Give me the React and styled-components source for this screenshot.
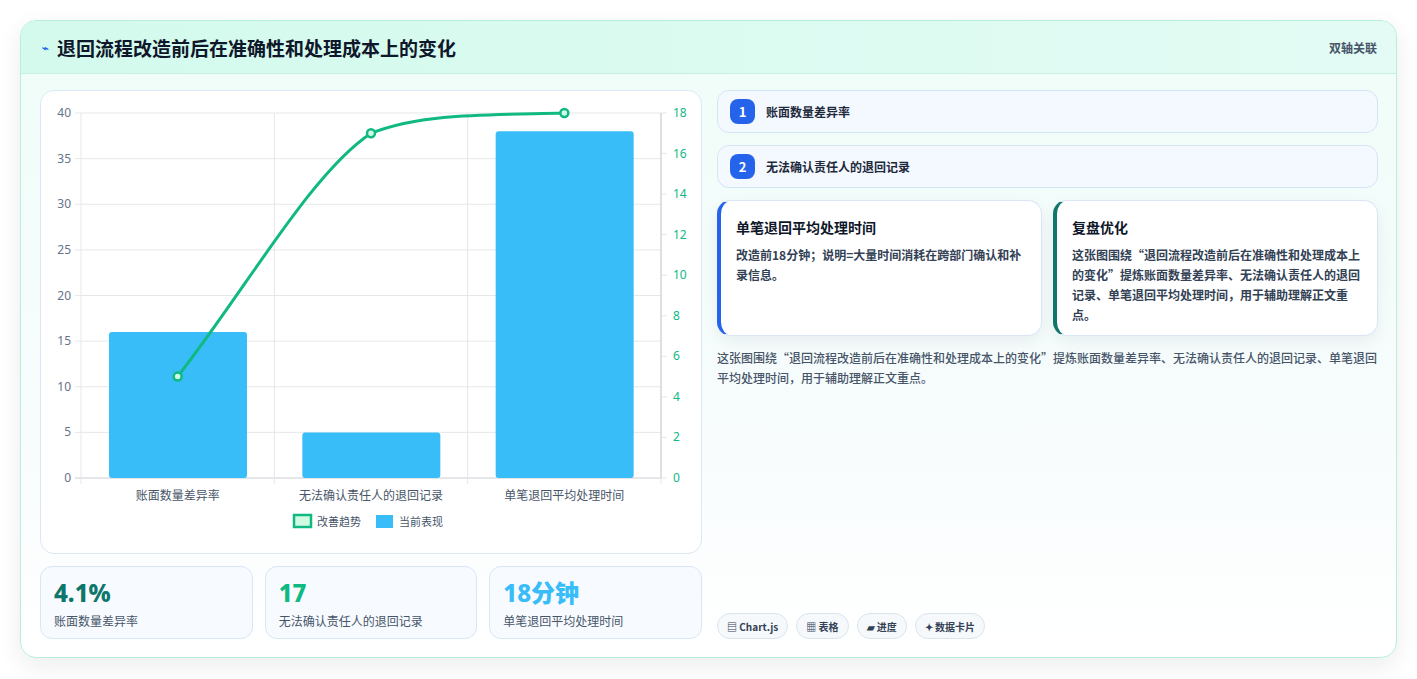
import React from "react";
import styled, { createGlobalStyle } from "styled-components";

const Global = createGlobalStyle`
  body { margin: 0; background: #fff; font-family: "Noto Sans CJK SC", "Noto Sans", sans-serif; }
`;

const Page = styled.div`
  padding: 20px 20px 21px 20px;
  width: 1417px;
  box-sizing: border-box;
`;

const Card = styled.div`
  width: 1377px;
  height: 638px;
  box-sizing: border-box;
  border: 1px solid #b9eedd;
  border-radius: 16px;
  background: linear-gradient(180deg, #effdf8 0%, #f7fcfd 60%, #ffffff 100%);
  box-shadow: 0 8px 24px rgba(15, 23, 42, 0.08);
  overflow: hidden;
  display: flex;
  flex-direction: column;
`;

const Header = styled.div`
  height: 55px;
  background: linear-gradient(90deg, #d3faed, #e3fbf4);
  border-bottom: 1px solid #c9efe3;
  display: flex;
  align-items: center;
  justify-content: space-between;
  padding: 0 19px 0 21px;
`;

const Title = styled.h1`
  margin: 0;
  font-size: 19px;
  font-weight: 700;
  color: #0f172a;
  display: flex;
  align-items: center;
  gap: 8px;
`;

const HeaderTag = styled.span`
  font-size: 12px;
  color: #475569;
  font-weight: 600;
`;

const Body = styled.div`
  display: grid;
  grid-template-columns: 662px 661px;
  gap: 15px;
  padding: 16px 19px 18px 19px;
  flex: 1;
`;

const Col = styled.div`
  display: flex;
  flex-direction: column;
  gap: 12px;
`;

const ChartCard = styled.div`
  height: 462px;
  background: #fff;
  border: 1px solid #dbe7f3;
  border-radius: 14px;
`;

const Stats = styled.div`
  display: grid;
  grid-template-columns: repeat(3, 1fr);
  gap: 12px;
`;

const Stat = styled.div`
  height: 73px;
  box-sizing: border-box;
  border: 1px solid #d8e7f5;
  border-radius: 12px;
  background: #f7fbff;
  padding: 10px 13px;
`;

const StatValue = styled.div`
  font-family: "Noto Sans", "Noto Sans CJK SC", sans-serif;
  font-size: 24px;
  font-weight: 800;
  line-height: 32px;
  color: ${(p) => p.color};
`;

const StatLabel = styled.div`
  font-size: 12px;
  color: #475569;
  margin-top: 3px;
`;

const Pill = styled.div`
  height: 43px;
  box-sizing: border-box;
  border: 1px solid #d3e5f5;
  border-radius: 12px;
  background: #f4f9ff;
  display: flex;
  align-items: center;
  gap: 11px;
  padding: 0 12px;
  font-size: 12px;
  font-weight: 600;
  color: #1e293b;
`;

const Num = styled.span`
  width: 25px;
  height: 25px;
  border-radius: 8px;
  background: #2563eb;
  color: #fff;
  font-size: 13px;
  font-weight: 700;
  display: flex;
  align-items: center;
  justify-content: center;
`;

const Cards = styled.div`
  display: grid;
  grid-template-columns: 1fr 1fr;
  gap: 11px;
`;

const Note = styled.div`
  height: 136px;
  box-sizing: border-box;
  background: #fff;
  border: 1px solid #dbe6f5;
  border-left: 4px solid ${(p) => p.accent};
  border-radius: 14px;
  padding: 16px 15px 0 15px;
  box-shadow: 0 6px 16px rgba(15, 23, 42, 0.06);
`;

const NoteTitle = styled.div`
  font-size: 14px;
  font-weight: 700;
  color: #0f172a;
  margin-bottom: 8px;
`;

const NoteText = styled.div`
  font-size: 12px;
  font-weight: 600;
  line-height: 20px;
  color: #334155;
`;

const Summary = styled.p`
  margin: 0;
  font-size: 12px;
  line-height: 20px;
  color: #475569;
  font-weight: 500;
`;

const Tags = styled.div`
  margin-top: auto;
  display: flex;
  gap: 8px;
`;

const Tag = styled.span`
  height: 26px;
  box-sizing: border-box;
  border: 1px solid #dbe4ee;
  border-radius: 13px;
  background: #f6f9fc;
  padding: 0 9px;
  font-size: 10px;
  font-weight: 700;
  color: #334155;
  display: flex;
  align-items: center;
`;

const cats = ["账面数量差异率", "无法确认责任人的退回记录", "单笔退回平均处理时间"];
const bars = [16, 5, 38];
const line = [5, 17, 18];

function Chart() {
  const x0 = 40, x1 = 620, y0 = 22, y1 = 387;
  const cw = (x1 - x0) / 3;
  const yL = (v) => y1 - ((y1 - y0) * v) / 40;
  const yR = (v) => y1 - ((y1 - y0) * v) / 18;
  const pts = line.map((v, i) => [x0 + cw * (i + 0.5), yR(v)]);
  const font = "Noto Sans, Noto Sans CJK SC, sans-serif";
  return (
    <svg width="661" height="460" style={{ display: "block" }}>
      {[0, 5, 10, 15, 20, 25, 30, 35, 40].map((v) => (
        <g key={v}>
          <line x1={x0 - 6} x2={x1} y1={yL(v)} y2={yL(v)} stroke={v === 0 ? "#c8ccd2" : "#e5e7eb"} />
          <text x={x0 - 10} y={yL(v) + 4} textAnchor="end" fontSize="12" fill="#64748b" fontFamily={font}>{v}</text>
        </g>
      ))}
      {[0, 2, 4, 6, 8, 10, 12, 14, 16, 18].map((v) => (
        <g key={v}>
          <line x1={x1} x2={x1 + 6} y1={yR(v)} y2={yR(v)} stroke="#e5e7eb" />
          <text x={x1 + 12} y={yR(v) + 4} fontSize="12" fill="#10b981" fontFamily={font}>{v}</text>
        </g>
      ))}
      {[0, 1, 2, 3].map((i) => (
        <line key={i} x1={x0 + cw * i} x2={x0 + cw * i} y1={y0} y2={y1 + 6} stroke="#e5e7eb" />
      ))}
      <line x1={x1} x2={x1} y1={y0} y2={y1} stroke="#c8ccd2" />
      {bars.map((v, i) => (
        <rect key={i} x={x0 + cw * i + 28} y={yL(v)} width={138} height={y1 - yL(v)} rx="3" fill="#38bdf8" />
      ))}
      <path
        d={`M${pts[0][0]},${pts[0][1]} C${pts[0][0] + 70},${pts[0][1] - 90} ${pts[1][0] - 60},${pts[1][1] + 40} ${pts[1][0]},${pts[1][1]} C${pts[1][0] + 50},${pts[1][1] - 20} ${pts[2][0] - 80},${pts[2][1] + 2} ${pts[2][0]},${pts[2][1]}`}
        fill="none" stroke="#10b981" strokeWidth="3"
      />
      {pts.map((p, i) => (
        <circle key={i} cx={p[0]} cy={p[1]} r="4" fill="#d1fae5" stroke="#10b981" strokeWidth="2.5" />
      ))}
      {cats.map((c, i) => (
        <text key={c} x={x0 + cw * (i + 0.5)} y={409} textAnchor="middle" fontSize="12" fill="#475569" fontFamily={font}>{c}</text>
      ))}
      <rect x="253" y="424" width="17" height="12" fill="#d1fae5" stroke="#10b981" strokeWidth="2.5" />
      <text x="276" y="435" fontSize="11" fill="#475569" fontFamily={font}>改善趋势</text>
      <rect x="335" y="424" width="17" height="13" fill="#38bdf8" />
      <text x="358" y="435" fontSize="11" fill="#475569" fontFamily={font}>当前表现</text>
    </svg>
  );
}

export default function App() {
  return (
    <Page>
      <Global />
      <Card>
        <Header>
          <Title>
            <span style={{ fontSize: 11, color: "#2563eb" }}>⌁</span>
            退回流程改造前后在准确性和处理成本上的变化
          </Title>
          <HeaderTag>双轴关联</HeaderTag>
        </Header>
        <Body>
          <Col>
            <ChartCard>
              <Chart />
            </ChartCard>
            <Stats>
              <Stat><StatValue color="#0f766e">4.1%</StatValue><StatLabel>账面数量差异率</StatLabel></Stat>
              <Stat><StatValue color="#10b981">17</StatValue><StatLabel>无法确认责任人的退回记录</StatLabel></Stat>
              <Stat><StatValue color="#38bdf8">18分钟</StatValue><StatLabel>单笔退回平均处理时间</StatLabel></Stat>
            </Stats>
          </Col>
          <Col>
            <Pill><Num>1</Num>账面数量差异率</Pill>
            <Pill><Num>2</Num>无法确认责任人的退回记录</Pill>
            <Cards>
              <Note accent="#2563eb">
                <NoteTitle>单笔退回平均处理时间</NoteTitle>
                <NoteText>改造前18分钟；说明=大量时间消耗在跨部门确认和补录信息。</NoteText>
              </Note>
              <Note accent="#0f766e">
                <NoteTitle>复盘优化</NoteTitle>
                <NoteText>这张图围绕“退回流程改造前后在准确性和处理成本上的变化”提炼账面数量差异率、无法确认责任人的退回记录、单笔退回平均处理时间，用于辅助理解正文重点。</NoteText>
              </Note>
            </Cards>
            <Summary>这张图围绕“退回流程改造前后在准确性和处理成本上的变化”提炼账面数量差异率、无法确认责任人的退回记录、单笔退回平均处理时间，用于辅助理解正文重点。</Summary>
            <Tags>
              <Tag>▤ Chart.js</Tag>
              <Tag>▦ 表格</Tag>
              <Tag>▰ 进度</Tag>
              <Tag>✦ 数据卡片</Tag>
            </Tags>
          </Col>
        </Body>
      </Card>
    </Page>
  );
}
